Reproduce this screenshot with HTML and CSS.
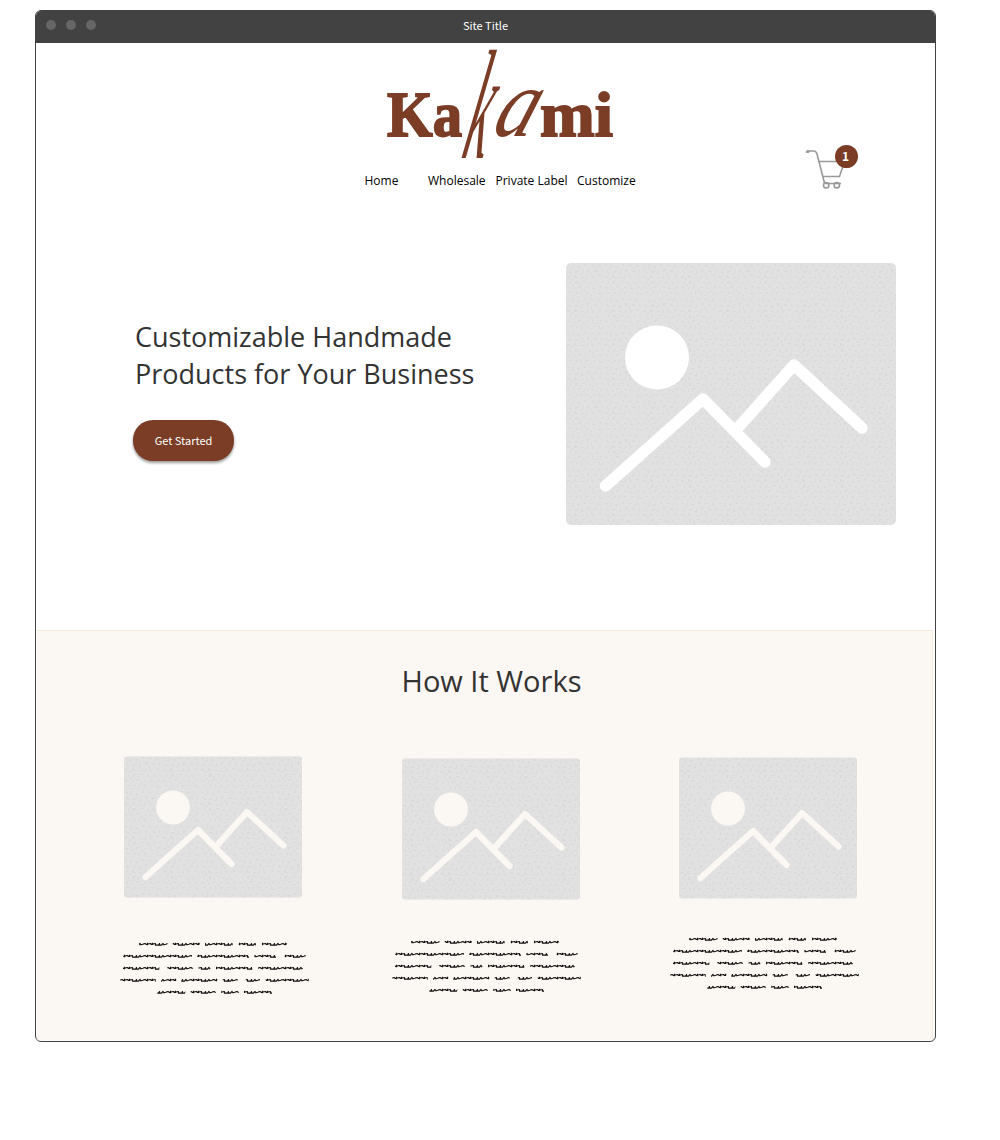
FILE: index.html
```
<!DOCTYPE html>
<html lang="en">
<head>
<meta charset="utf-8">
<title>Kakami</title>
<link rel="stylesheet" href="styles.css">
</head>
<body>
<svg class="defs" aria-hidden="true">
  <defs>
    <pattern id="grain" width="38" height="34" patternUnits="userSpaceOnUse">
      <path class="speck" d="M1 2h3v1h-3zM7 1h1v3h-1zM11 3h3v1h-1v2h-1v-2h-1zM18 1h2v2h-2zM24 2h4v1h-4zM32 1h1v2h2v1h-3zM3 7h1v2h2v1h-3zM9 8h4v1h-2v1h-2zM16 7h1v4h-1zM21 6h3v1h-1v2h-2zM28 7h2v1h2v1h-4zM35 6h1v4h-1zM1 13h4v1h-2v1h-2zM8 12h2v2h2v1h-4zM15 14h3v1h-3zM21 12h1v3h-1zM25 13h3v1h-1v2h-1v-2h-1zM32 12h3v2h-1v-1h-2zM4 18h1v3h-1zM9 18h3v1h-1v2h-2zM16 18h4v1h-4zM23 19h2v2h-2zM29 18h1v3h2v-1h-1v-1h-1zM35 18h2v1h-2zM1 24h3v2h-1v-1h-2zM8 24h1v3h-1zM12 23h4v1h-2v1h-2zM20 24h3v1h-3zM26 23h1v2h2v1h-3zM33 23h3v1h-1v2h-1zM3 29h3v1h-3zM10 29h2v2h-2zM15 28h1v4h-1zM19 29h4v1h-2v2h-1v-2h-1zM27 29h3v1h-3zM33 28h1v3h2v1h-3zM5 4h2v2h-1v-1h-1zM14 10h2v1h-2zM30 4h1v2h-1zM24 10h2v2h-1v-1h-1zM5 15h2v2h-2zM19 15h2v1h-2zM13 20h2v2h-1v-1h-1zM26 21h2v1h-2zM6 22h2v1h-2zM17 26h2v2h-1v-1h-1zM30 26h2v1h-2zM36 30h1v2h-1zM7 32h2v1h-2zM24 32h2v1h-2z"/>
    </pattern>
    <pattern id="scribble" width="23" height="12" patternUnits="userSpaceOnUse">
      <path class="scribble" d="M0 6.200L2 5.500L3.500 6.500H5M4.500 4.800V7.300M5 6L7.500 5.500L8.500 6.500H10M9.500 4.800V7M10 6L12.500 5.500V7.200H15.500L16.500 5.600V7.200H18.500L20 5.500L21 6.800L23 6.200"/>
    </pattern>
    <symbol id="copy" viewBox="0 0 190 60">
      <path fill="url(#scribble)" d="M19 0h28.500v12h-28.500zM52.700 0h27.300v12h-27.300zM85 0h27.700v12h-27.700zM118.700 0h17.300v12h-17.300zM142 0h25v12h-25zM3.300 12h68.700v12h-68.700zM77.300 12h51.700v12h-51.700zM134.300 12h21.700v12h-21.700zM164.700 12h21v12h-21zM3 24h36.300v12h-36.300zM47.300 24h25.400v12h-25.400zM78.700 24h11.600v12h-11.600zM96 24h36.300v12h-36.300zM138 24h44.700v12h-44.700zM.3 36h35.400v12h-35.400zM41 36h15.300v12h-15.300zM61.300 36h36v12h-36zM102.700 36h15v12h-15zM125.700 36h14.300v12h-14.300zM145.700 36h43v12h-43zM37.300 48h28v12h-28zM70.700 48h25v12h-25zM101.300 48h17.400v12h-17.400zM124 48h28v12h-28z"/>
    </symbol>
  </defs>
</svg>
<div class="window">
  <div class="titlebar">
    <div class="dots"><i></i><i></i><i></i></div>
    <span>Site Title</span>
  </div>
  <header class="header">
    <svg class="logo" viewBox="0 0 240 116" role="img" aria-label="Kakami">
      <g class="logo-fat">
        <text x="7" y="93" textLength="75" lengthAdjust="spacingAndGlyphs">Ka</text>
        <text x="160" y="93" textLength="73" lengthAdjust="spacingAndGlyphs">mi</text>
      </g>
      <text class="logo-script" transform="translate(80 115) skewX(-13) scale(1 3)" font-size="52">k</text>
      <text class="logo-script" transform="translate(110 93) skewX(-20) scale(1.150 1.400)" font-size="70">a</text>
    </svg>
    <nav class="nav"><a class="home">Home</a><a class="wholesale">Wholesale</a><a class="private">Private Label</a><a>Customize</a></nav>
    <div class="cart">
      <svg viewBox="0 0 60 50">
        <path d="M1 7.500Q2 6 4 6H9Q11 6 12 9L19.500 38Q20 38.500 21 38.500H36M13.500 16.500H39.500L34.500 31.500H18"/>
        <circle cx="3" cy="6.500" r=".8"/><circle cx="21.200" cy="40.200" r="2.700"/><circle cx="31.800" cy="40.200" r="2.700"/>
      </svg>
      <span class="badge">1</span>
    </div>
  </header>
  <section class="hero">
    <div class="intro">
      <h1>Customizable Handmade<br>Products for Your Business</h1>
      <button class="cta">Get Started</button>
    </div>
    <svg class="hero-pic" viewBox="0 0 330 262"><rect class="pic-base" width="330" height="262" rx="5"/><rect fill="url(#grain)" width="330" height="262" rx="5"/><circle class="pic-sun" cx="91" cy="94.500" r="32"/><path class="pic-line" d="M39.500 223L137 136L199 199M170 167L228 102L296 165"/></svg>
  </section>
  <section class="works">
    <h2>How It Works</h2>
    <div class="steps">
      <article class="step first"><svg class="step-pic" viewBox="0 0 178 142"><rect class="pic-base" y=".5" width="178" height="141" rx="3"/><rect fill="url(#grain)" y=".5" width="178" height="141" rx="3"/><circle class="pic-sun" cx="49" cy="51.500" r="17"/><path class="pic-line" d="M21.500 121L74 74L107.500 108M91.500 91L123 56L159.500 89.500"/></svg><svg class="copy"><use href="#copy"/></svg></article>
      <article class="step second"><svg class="step-pic" viewBox="0 0 178 142"><rect class="pic-base" y=".5" width="178" height="141" rx="3"/><rect fill="url(#grain)" y=".5" width="178" height="141" rx="3"/><circle class="pic-sun" cx="49" cy="51.500" r="17"/><path class="pic-line" d="M21.500 121L74 74L107.500 108M91.500 91L123 56L159.500 89.500"/></svg><svg class="copy"><use href="#copy"/></svg></article>
      <article class="step third"><svg class="step-pic" viewBox="0 0 178 142"><rect class="pic-base" y=".5" width="178" height="141" rx="3"/><rect fill="url(#grain)" y=".5" width="178" height="141" rx="3"/><circle class="pic-sun" cx="49" cy="51.500" r="17"/><path class="pic-line" d="M21.500 121L74 74L107.500 108M91.500 91L123 56L159.500 89.500"/></svg><svg class="copy"><use href="#copy"/></svg></article>
    </div>
  </section>
</div>
</body>
</html>
```
FILE: styles.css
```
* { box-sizing: border-box; }
body { margin: 0; padding: 10px 0 0 35px; background: #fff; font-family: "Open Sans", "Noto Sans", sans-serif; color: #333; }
.defs { position: absolute; width: 0; height: 0; }
.window { width: 901px; height: 1032px; border: 1px solid #424242; border-radius: 6px; overflow: hidden; }
.titlebar { height: 32px; background: #424242; color: #fff; display: grid; grid-template-columns: 1fr auto 1fr; align-items: center; font: 11px "Noto Sans CJK SC", sans-serif; }
.titlebar span { line-height: 28px; padding-bottom: 4px; }
.dots { display: flex; gap: 10px; padding: 0 0 4px 10.4px; }
.dots i { width: 10px; height: 10px; border-radius: 50%; background: #666; }
.header { height: 160px; display: grid; grid-template-columns: 328px 280px 1fr; grid-template-rows: 116px 1fr; }
.logo { grid-column: 2; width: 240px; height: 116px; margin-left: 16px; overflow: visible; }
.logo-fat { font: bold 63px "Liberation Serif", serif; fill: #7b3d26; stroke: #7b3d26; stroke-width: 1.8; }
.logo-script { font-family: "Liberation Serif", serif; font-style: italic; fill: #7b3d26; }
.nav { grid-column: 2; grid-row: 2; display: flex; font-size: 12px; line-height: 17px; color: #000; padding: 13px 0 0 .5px; white-space: nowrap; }
.home { width: 63.5px; }
.wholesale { width: 67.5px; }
.private { width: 81.5px; }
.cart { grid-column: 3; grid-row: 1 / 3; position: relative; width: 60px; height: 50px; margin: 102px 0 0 161px; }
.cart svg { width: 60px; height: 50px; fill: none; stroke: #999; stroke-width: 1.6; }
.badge { position: absolute; left: 29.5px; top: 0; width: 23px; height: 23px; border-radius: 50%; background: #7b3d26; color: #fff; font: bold 12px/22px "Noto Sans CJK SC", sans-serif; text-align: center; padding-right: 1px; }
.hero { height: 427px; display: flex; justify-content: space-between; padding: 60px 39px 0 97px; }
.intro { padding-top: 55px; }
h1 { margin: 0 0 28px 2px; font-size: 27px; line-height: 37px; font-weight: 400; white-space: nowrap; }
.cta { display: block; width: 101px; height: 41px; padding: 0 0 2px; border: 0; border-radius: 20px; background: #7b3d26; color: #fff; font: 11px "Noto Sans CJK SC", sans-serif; box-shadow: 0 2px 3px rgba(0,0,0,.4); }
.hero-pic { width: 330px; height: 262px; }
.pic-base { fill: #e1e1e1; }
.speck { fill: #dadada; }
.pic-sun { fill: #fff; }
.pic-line { fill: none; stroke: #fff; stroke-width: 11.5; stroke-linecap: round; stroke-linejoin: round; }
.works { height: 410px; margin: 0 2px 0 1px; border: solid #f6ead9; border-width: 1px 1px 0 0; background: #fbf7f2; padding-top: 30px; }
h2 { margin: 0 0 55px 14px; font-size: 29px; line-height: 40px; font-weight: 400; text-align: center; }
.steps { display: flex; }
.step { width: 190px; display: flex; flex-direction: column; }
.first { margin-left: 83px; }
.second { margin: 2px 0 0 82px; }
.third { margin: 1px 0 0 88px; }
.step-pic { width: 178px; height: 142px; margin-left: 4px; }
.second .step-pic { margin-left: 10px; }
.third .step-pic { margin-left: 9px; }
.works .pic-sun { fill: #fbf7f2; }
.works .pic-line { stroke: #fbf7f2; stroke-width: 6.3; }
.copy { width: 190px; height: 60px; margin-top: 40px; }
.second .copy { margin-top: 36px; }
.third .copy { margin-top: 34px; }
.scribble { fill: none; stroke: #111; stroke-width: 1.2; stroke-linejoin: round; }
```
